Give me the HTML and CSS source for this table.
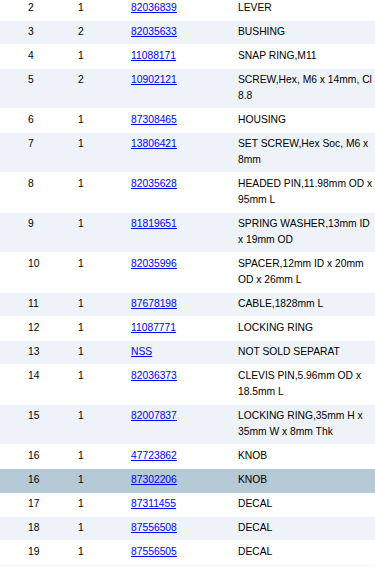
FILE: index.html
```html
<!DOCTYPE html>
<html>
<head>
<meta charset="utf-8">
<link rel="stylesheet" href="styles.css">
</head>
<body>
<table class="parts">
  <colgroup>
    <col class="c-item"><col class="c-qty"><col class="c-part"><col class="c-desc">
  </colgroup>
  <tbody>
    <tr><td>2</td><td>1</td><td><a href="#">82036839</a></td><td>LEVER</td></tr>
    <tr class="alt"><td>3</td><td>2</td><td><a href="#">82035633</a></td><td>BUSHING</td></tr>
    <tr><td>4</td><td>1</td><td><a href="#">11088171</a></td><td>SNAP RING,M11</td></tr>
    <tr class="alt"><td>5</td><td>2</td><td><a href="#">10902121</a></td><td>SCREW,Hex, M6 x 14mm, Cl 8.8</td></tr>
    <tr><td>6</td><td>1</td><td><a href="#">87308465</a></td><td>HOUSING</td></tr>
    <tr class="alt"><td>7</td><td>1</td><td><a href="#">13806421</a></td><td>SET SCREW,Hex Soc, M6 x 8mm</td></tr>
    <tr><td>8</td><td>1</td><td><a href="#">82035628</a></td><td>HEADED PIN,11.98mm OD x 95mm L</td></tr>
    <tr class="alt"><td>9</td><td>1</td><td><a href="#">81819651</a></td><td>SPRING WASHER,13mm ID x 19mm OD</td></tr>
    <tr><td>10</td><td>1</td><td><a href="#">82035996</a></td><td>SPACER,12mm ID x 20mm OD x 26mm L</td></tr>
    <tr class="alt"><td>11</td><td>1</td><td><a href="#">87678198</a></td><td>CABLE,1828mm L</td></tr>
    <tr><td>12</td><td>1</td><td><a href="#">11087771</a></td><td>LOCKING RING</td></tr>
    <tr class="alt"><td>13</td><td>1</td><td><a href="#">NSS</a></td><td>NOT SOLD SEPARAT</td></tr>
    <tr><td>14</td><td>1</td><td><a href="#">82036373</a></td><td>CLEVIS PIN,5.96mm OD x 18.5mm L</td></tr>
    <tr class="alt"><td>15</td><td>1</td><td><a href="#">82007837</a></td><td>LOCKING RING,35mm H x 35mm W x 8mm Thk</td></tr>
    <tr><td>16</td><td>1</td><td><a href="#">47723862</a></td><td>KNOB</td></tr>
    <tr class="sel"><td>16</td><td>1</td><td><a href="#">87302206</a></td><td>KNOB</td></tr>
    <tr><td>17</td><td>1</td><td><a href="#">87311455</a></td><td>DECAL</td></tr>
    <tr class="alt"><td>18</td><td>1</td><td><a href="#">87556508</a></td><td>DECAL</td></tr>
    <tr><td>19</td><td>1</td><td><a href="#">87556505</a></td><td>DECAL</td></tr>
    <tr class="alt empty"><td></td><td></td><td></td><td></td></tr>
  </tbody>
</table>
</body>
</html>
```

FILE: styles.css
```css
html, body {
  margin: 0;
  padding: 0;
  background: #ffffff;
}

body {
  font-family: "Liberation Sans", Arial, sans-serif;
  font-size: 10.3px;
  color: #000;
  overflow: hidden;
}

.parts {
  width: 375px;
  table-layout: fixed;
  border-collapse: separate;
  border-spacing: 0 1px;
  margin-top: -4px;
}

.c-item { width: 78px; }
.c-qty { width: 53px; }
.c-part { width: 107px; }
.c-desc { width: 137px; }

.parts td {
  padding: 3px 0 4px 0;
  line-height: 16px;
  vertical-align: top;
  text-align: left;
}

.parts td:first-child {
  padding-left: 28px;
}

.parts a {
  color: #0000ff;
  text-decoration: underline;
}

.parts tr.alt td {
  background: #eef3f9;
}

.parts tr.sel td {
  background: #b5c9d7;
  box-shadow: 0 1px 0 #b5c9d7;
}

.parts tr.empty td {
  height: 16px;
}
```
